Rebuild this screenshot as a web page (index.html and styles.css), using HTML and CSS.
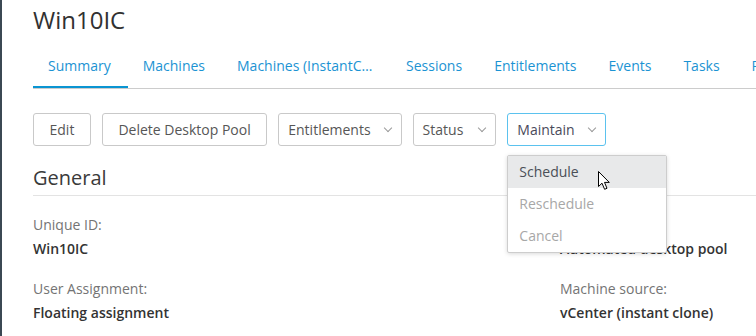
FILE: index.html
```html
<!DOCTYPE html>
<html lang="en">
<head>
    <meta charset="UTF-8">
    <title>Win10IC</title>
    <link rel="stylesheet" href="styles.css">
</head>
<body>

    <div class="sidebar"></div>

    <div class="main">
        <h1 class="title">Win10IC</h1>

        <!-- Tabs -->
        <ul class="tabs">
            <li class="tab active">Summary</li>
            <li class="tab">Machines</li>
            <li class="tab tab-long">Machines (InstantClone Details)</li>
            <li class="tab">Sessions</li>
            <li class="tab">Entitlements</li>
            <li class="tab">Events</li>
            <li class="tab">Tasks</li>
            <li class="tab">Policies</li>
        </ul>

        <!-- Actions -->
        <div class="actions">
            <button class="btn">Edit</button>
            <button class="btn">Delete Desktop Pool</button>
            <div class="select">Entitlements <span class="chevron"></span></div>
            <div class="select select-status">Status <span class="chevron"></span></div>
            <div class="select-wrap">
                <div class="select focused">Maintain <span class="chevron"></span></div>
                <ul class="menu">
                    <li class="menu-item hover">Schedule</li>
                    <li class="menu-item disabled">Reschedule</li>
                    <li class="menu-item disabled">Cancel</li>
                </ul>
                <svg class="cursor" width="13" height="20" viewBox="0 0 13 20">
                    <path d="M0.5 0.5 L0.5 15.5 L4 12.2 L6.6 18.3 L9 17.3 L6.5 11.4 L11.3 11.4 Z" fill="#fff" stroke="#000" stroke-width="1" stroke-linejoin="round"/>
                </svg>
            </div>
        </div>

        <h2 class="section">General</h2>

        <div class="details">
            <div class="field">
                <div class="label">Unique ID:</div>
                <div class="value">Win10IC</div>
            </div>
            <div class="field">
                <div class="label">Type:</div>
                <div class="value">Automated desktop pool</div>
            </div>
            <div class="field">
                <div class="label">User Assignment:</div>
                <div class="value">Floating assignment</div>
            </div>
            <div class="field">
                <div class="label">Machine source:</div>
                <div class="value">vCenter (instant clone)</div>
            </div>
        </div>
    </div>

</body>
</html>
```

FILE: styles.css
```css
body {
    font-family: "Open Sans", "Liberation Sans", sans-serif;
    margin: 0;
    padding: 0;
    height: 336px;
    overflow: hidden;
    background: #fff;
    display: flex;
}

.sidebar {
    width: 2px;
    flex-shrink: 0;
    background: #3b4853;
}

.main {
    flex-grow: 1;
    padding: 4px 0 0 31px;
    min-width: 0;
}

.title {
    margin: 0;
    font-size: 24px;
    line-height: 32px;
    font-weight: 400;
    color: #313131;
}

.tabs {
    list-style: none;
    margin: 0;
    padding: 0;
    display: flex;
    border-bottom: 1px solid #cccccc;
    white-space: nowrap;
    overflow: hidden;
}

.tab {
    flex-shrink: 0;
    padding: 20px 17px 10px 15px;
    margin-bottom: -1px;
    font-size: 14px;
    line-height: 20px;
    color: #1b93d3;
    border-bottom: 3px solid transparent;
}

.tab.active {
    border-bottom-color: #0a95d2;
}

.tab-long {
    max-width: 137px;
    overflow: hidden;
    text-overflow: ellipsis;
}

.actions {
    display: flex;
    gap: 11px;
    margin-top: 24px;
}

.btn,
.select {
    height: 33px;
    box-sizing: border-box;
    border: 1px solid #c9c9c9;
    border-radius: 3px;
    background: #fff;
    font-family: inherit;
    font-size: 14px;
    color: #565656;
    display: flex;
    align-items: center;
}

.btn {
    padding: 0 15.5px;
}

.select {
    padding: 0 8px 0 9px;
    gap: 13px;
}

.select-status {
    gap: 15px;
}

.select.focused {
    border-color: #5bc2ee;
    color: #4a4a5a;
}

.chevron {
    width: 5px;
    height: 5px;
    border-right: 1px solid #9a9a9a;
    border-bottom: 1px solid #9a9a9a;
    transform: rotate(45deg);
    margin: -4px 2px 0 1px;
}

.select-wrap {
    position: relative;
}

.menu {
    position: absolute;
    top: 42px;
    left: 0;
    width: 160px;
    box-sizing: border-box;
    list-style: none;
    margin: 0;
    padding: 0;
    background: #fff;
    border: 1px solid #cdcdcd;
    border-radius: 2px;
    box-shadow: 0 1px 4px rgba(0, 0, 0, 0.15);
    z-index: 5;
}

.menu-item {
    height: 32px;
    line-height: 32px;
    padding-left: 11px;
    font-size: 14px;
    color: #4a4f57;
}

.menu-item.hover {
    background: #e8e9ea;
}

.menu-item.disabled {
    color: #a7a7a7;
}

.cursor {
    position: absolute;
    top: 58px;
    left: 91px;
    z-index: 6;
}

.section {
    margin: 18px 0 0;
    padding-bottom: 3px;
    font-size: 20px;
    line-height: 28px;
    font-weight: 400;
    color: #3a3a3a;
    border-bottom: 1px solid #e3e3e3;
}

.details {
    display: grid;
    grid-template-columns: 527px 1fr;
    row-gap: 16px;
    margin-top: 17px;
}

.label {
    font-size: 14px;
    line-height: 24px;
    color: #747474;
}

.value {
    font-size: 14px;
    line-height: 24px;
    font-weight: 600;
    color: #333;
    white-space: nowrap;
}
```
